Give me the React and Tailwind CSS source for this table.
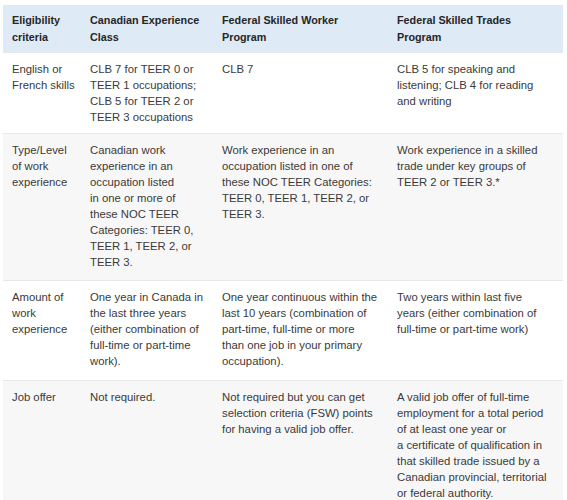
import React from "react";

const rows = [
  {
    bg: "bg-white",
    cells: [
      ["English or", "French skills"],
      ["CLB 7 for TEER 0 or", "TEER 1 occupations;", "CLB 5 for TEER 2 or", "TEER 3 occupations"],
      ["CLB 7"],
      ["CLB 5 for speaking and", "listening; CLB 4 for reading", "and writing"],
    ],
    h: "h-[81px]",
  },
  {
    bg: "bg-[#f7f7f7]",
    cells: [
      ["Type/Level", "of work", "experience"],
      ["Canadian work", "experience in an", "occupation listed", "in one or more of", "these NOC TEER", "Categories: TEER 0,", "TEER 1, TEER 2, or", "TEER 3."],
      ["Work experience in an", "occupation listed in one of", "these NOC TEER Categories:", "TEER 0, TEER 1, TEER 2, or", "TEER 3."],
      ["Work experience in a skilled", "trade under key groups of", "TEER 2 or TEER 3.*"],
    ],
    h: "h-[147px]",
  },
  {
    bg: "bg-white",
    cells: [
      ["Amount of", "work", "experience"],
      ["One year in Canada in", "the last three years", "(either combination of", "full-time or part-time", "work)."],
      ["One year continuous within the", "last 10 years (combination of", "part-time, full-time or more", "than one job in your primary", "occupation)."],
      ["Two years within last five", "years (either combination of", "full-time or part-time work)"],
    ],
    h: "h-[100px]",
  },
  {
    bg: "bg-[#f7f7f7]",
    cells: [
      ["Job offer"],
      ["Not required."],
      ["Not required but you can get", "selection criteria (FSW) points", "for having a valid job offer."],
      ["A valid job offer of full-time", "employment for a total period", "of at least one year or", "a certificate of qualification in", "that skilled trade issued by a", "Canadian provincial, territorial", "or federal authority."],
    ],
    h: "h-[124px]",
  },
];

const headers = [
  ["Eligibility", "criteria"],
  ["Canadian Experience", "Class"],
  ["Federal Skilled Worker", "Program"],
  ["Federal Skilled Trades", "Program"],
];

function Lines({ lines }) {
  return (
    <div>
      {lines.map((l, i) => (
        <div key={i} className="whitespace-nowrap">
          {l}
        </div>
      ))}
    </div>
  );
}

export default function App() {
  return (
    <div
      className="w-[567px] h-[500px] overflow-hidden bg-white pt-[5px] pl-[3px] text-[#3a3a3a]"
      style={{ fontFamily: '"Liberation Sans", Arial, sans-serif' }}
    >
      <div className="w-[560px]">
        <div className="grid grid-cols-[78px_132px_175px_175px] bg-[#deeaf6] h-[47px] text-[10.8px] leading-[17px] font-bold text-[#262626]">
          {headers.map((h, i) => (
            <div key={i} className="pl-[9px] pt-[7px]">
              <Lines lines={h} />
            </div>
          ))}
        </div>
        {rows.map((r, ri) => (
          <div
            key={ri}
            className={`grid grid-cols-[78px_132px_175px_175px] ${r.bg} ${r.h} border-t border-[#e8e8e8] text-[11.3px] leading-[16px]`}
          >
            {r.cells.map((c, ci) => (
              <div key={ci} className="pl-[9px] pt-[8px]">
                <Lines lines={c} />
              </div>
            ))}
          </div>
        ))}
      </div>
    </div>
  );
}
